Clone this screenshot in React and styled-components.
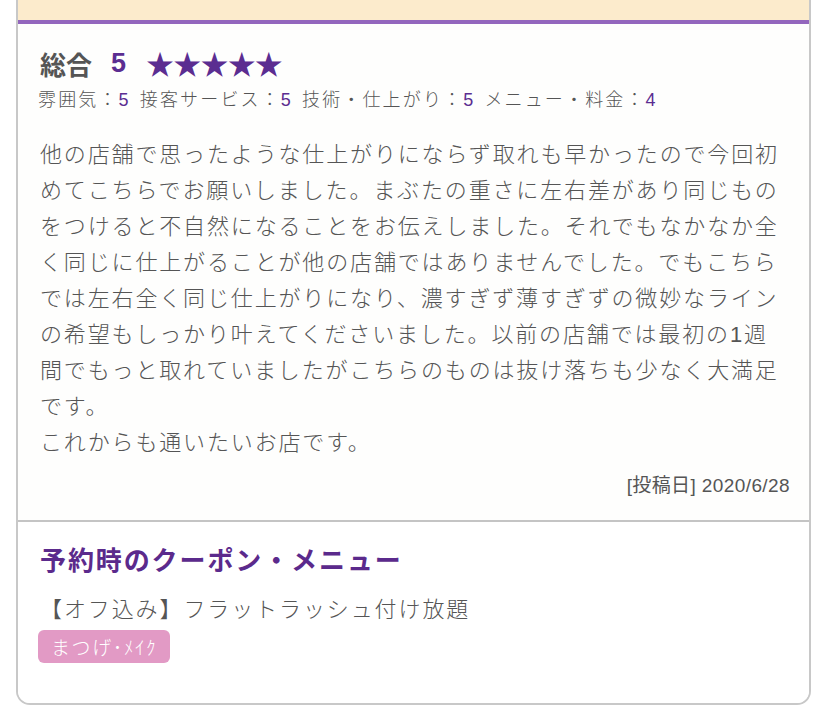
import React from "react";
import styled, { createGlobalStyle } from "styled-components";

const GlobalStyle = createGlobalStyle`
  html, body {
    margin: 0;
    padding: 0;
    background: #ffffff;
  }
  body {
    font-family: "Liberation Sans", "Noto Sans CJK JP", sans-serif;
    color: #555555;
    -webkit-font-smoothing: antialiased;
  }
`;

const Page = styled.div`
  width: 828px;
  padding: 0 0 12px 16px;
  box-sizing: border-box;
`;

const Card = styled.article`
  width: 795px;
  box-sizing: border-box;
  border: 2px solid #c8c8c8;
  border-top: none;
  border-radius: 0 0 14px 14px;
  background: #ffffff;
  overflow: hidden;
`;

const HeaderStrip = styled.div`
  height: 20px;
  background: #fcebcc;
  border-bottom: 4px solid #9366bd;
`;

const ReviewSection = styled.section`
  padding: 20px 19px 22px 22px;
  background: #fefefd;
  border-bottom: 2px solid #c4c4c4;
`;

const TotalRow = styled.div`
  display: flex;
  align-items: center;
  height: 38px;
  font-size: 26px;
  font-weight: 700;
`;

const TotalLabel = styled.span`
  color: #555555;
`;

const TotalScore = styled.span`
  color: #5b2d91;
  margin-left: 19px;
  font-size: 27px;
`;

const Stars = styled.span`
  color: #5b2d91;
  margin-left: 20px;
  font-family: "Noto Sans CJK JP", sans-serif;
  font-size: 28px;
  font-weight: 400;
  letter-spacing: -0.8px;
`;

const SubRatings = styled.div`
  margin-top: 5px;
  margin-left: -2px;
  display: flex;
  gap: 9px;
  font-size: 18px;
  line-height: 26px;
  letter-spacing: 2.15px;
  font-weight: 300;
`;

const SubItem = styled.span`
  white-space: nowrap;
`;

const SubScore = styled.span`
  color: #5b2d91;
  font-weight: 400;
`;

const Body = styled.p`
  margin: 24px 0 0;
  font-size: 22px;
  line-height: 36px;
  letter-spacing: 1.85px;
  font-weight: 300;
  color: #555555;
  white-space: nowrap;
`;

const PostDate = styled.div`
  margin-top: 13px;
  text-align: right;
  font-size: 19px;
  line-height: 24px;
  letter-spacing: 0.4px;
  color: #555555;
`;

const CouponSection = styled.section`
  padding: 21px 22px 40px 22px;
  background: #ffffff;
`;

const CouponTitle = styled.h2`
  margin: 0;
  font-size: 26px;
  line-height: 36px;
  font-weight: 700;
  letter-spacing: 1.9px;
  color: #5b2a8c;
`;

const MenuName = styled.div`
  margin-top: 15px;
  font-size: 22px;
  line-height: 32px;
  letter-spacing: 1.9px;
  font-weight: 300;
  color: #555555;
`;

const Tag = styled.span`
  display: inline-flex;
  align-items: center;
  margin-top: 4px;
  margin-left: -2px;
  height: 33px;
  padding: 0 13px;
  border-radius: 6px;
  background: #e29ac5;
  color: #ffffff;
  font-family: "Noto Sans CJK JP", sans-serif;
  font-size: 19px;
  font-weight: 300;
  letter-spacing: 1.6px;
`;

const bodyLines = [
  "他の店舗で思ったような仕上がりにならず取れも早かったので今回初",
  "めてこちらでお願いしました。まぶたの重さに左右差があり同じもの",
  "をつけると不自然になることをお伝えしました。それでもなかなか全",
  "く同じに仕上がることが他の店舗ではありませんでした。でもこちら",
  "では左右全く同じ仕上がりになり、濃すぎず薄すぎずの微妙なライン",
  "の希望もしっかり叶えてくださいました。以前の店舗では最初の1週",
  "間でもっと取れていましたがこちらのものは抜け落ちも少なく大満足",
  "です。",
  "これからも通いたいお店です。",
];

const subRatings = [
  { label: "雰囲気：", score: 5 },
  { label: "接客サービス：", score: 5 },
  { label: "技術・仕上がり：", score: 5 },
  { label: "メニュー・料金：", score: 4 },
];

export default function App() {
  return (
    <>
      <GlobalStyle />
      <Page>
        <Card>
          <HeaderStrip />
          <ReviewSection>
            <TotalRow>
              <TotalLabel>総合</TotalLabel>
              <TotalScore>5</TotalScore>
              <Stars>★★★★★</Stars>
            </TotalRow>
            <SubRatings>
              {subRatings.map((r) => (
                <SubItem key={r.label}>
                  {r.label}
                  <SubScore>{r.score}</SubScore>
                </SubItem>
              ))}
            </SubRatings>
            <Body>
              {bodyLines.map((line, i) => (
                <React.Fragment key={i}>
                  {line}
                  {i < bodyLines.length - 1 && <br />}
                </React.Fragment>
              ))}
            </Body>
            <PostDate>[投稿日] 2020/6/28</PostDate>
          </ReviewSection>
          <CouponSection>
            <CouponTitle>予約時のクーポン・メニュー</CouponTitle>
            <MenuName>【オフ込み】フラットラッシュ付け放題</MenuName>
            <Tag>まつげ･ﾒｲｸ</Tag>
          </CouponSection>
        </Card>
      </Page>
    </>
  );
}
